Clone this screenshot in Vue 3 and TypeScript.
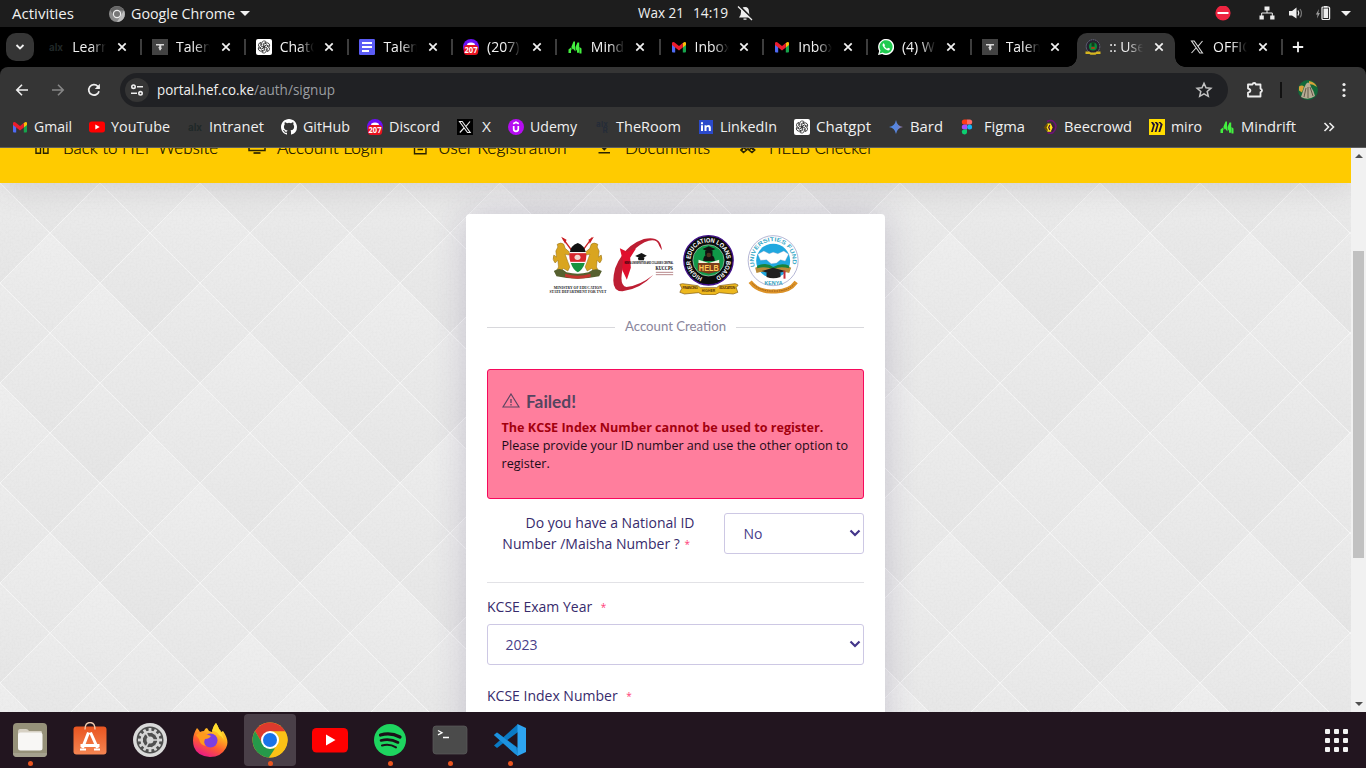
<script setup lang="ts">
import { h } from 'vue'

interface FitProps { t: string; w: number; s?: number; b?: number; hgt?: number; cls?: string }

// One line of text set to an exact advance width.
const FitText = (p: FitProps) =>
  h('svg', { class: ['fit', p.cls], width: p.w, height: p.hgt ?? 20 }, [
    h('text', { x: 0, y: p.b ?? 15, 'font-size': p.s ?? 14, textLength: p.w, lengthAdjust: 'spacingAndGlyphs' }, p.t),
  ])
FitText.props = ['t', 'w', 's', 'b', 'hgt', 'cls']

const tabs = [
  { icon: 'alx', title: 'Learn', sep: true },
  { icon: 'tal', title: 'Talent', sep: true },
  { icon: 'gpt', title: 'ChatG', sep: true },
  { icon: 'docs', title: 'Talent', sep: true },
  { icon: 'disc', title: '(207) D', sep: true },
  { icon: 'mind', title: 'Mindr', sep: true },
  { icon: 'gmail', title: 'Inbox', sep: true },
  { icon: 'gmail', title: 'Inbox', sep: true },
  { icon: 'wa', title: '(4) Wh', sep: true },
  { icon: 'tal', title: 'Talent', sep: false },
  { icon: 'helbfav', title: ':: User', sep: false, active: true },
  { icon: 'xw', title: 'OFFIC', sep: true },
]

const bookmarks = [
  { icon: 'gmail', t: 'Gmail', w: 38 },
  { icon: 'yt', t: 'YouTube', w: 59 },
  { icon: 'alx', t: 'Intranet', w: 55 },
  { icon: 'gh', t: 'GitHub', w: 47 },
  { icon: 'disc', t: 'Discord', w: 51 },
  { icon: 'xb', t: 'X', w: 9, pad: 3 },
  { icon: 'udemy', t: 'Udemy', w: 47 },
  { icon: 'room', t: 'TheRoom', w: 65 },
  { icon: 'li', t: 'LinkedIn', w: 57 },
  { icon: 'gpt', t: 'Chatgpt', w: 55 },
  { icon: 'bard', t: 'Bard', w: 33 },
  { icon: 'figma', t: 'Figma', w: 41, pad: 2 },
  { icon: 'bee', t: 'Beecrowd', w: 68 },
  { icon: 'miro', t: 'miro', w: 31 },
  { icon: 'mind', t: 'Mindrift', w: 55 },
]

const nav = [
  { icon: 'n-build', t: 'Back to HEF Website', w: 155, slot: 29 },
  { icon: 'n-desk', t: 'Account Login', w: 106, slot: 29 },
  { icon: 'n-doc', t: 'User Registration', w: 128.5, slot: 25 },
  { icon: 'n-down', t: 'Documents', w: 85, slot: 28.5 },
  { icon: 'n-bino', t: 'HELB Checker', w: 104, slot: 29 },
]

const dock = [
  { icon: 'd-files', run: true },
  { icon: 'd-soft', run: false },
  { icon: 'd-set', run: false },
  { icon: 'd-fox', run: false },
  { icon: 'd-chrome', run: true, focus: true },
  { icon: 'd-yt', run: false },
  { icon: 'd-spot', run: true },
  { icon: 'd-term', run: true },
  { icon: 'd-code', run: true },
]

// Shade offsets for the 3x3 repeat of the diamond pattern.
const shades = [0.0, 0.035, 0.015, 0.03, 0.0, 0.025, 0.02, 0.03, 0.0]
const diamonds: { cx: number; cy: number; o: number }[] = []
for (let r = 0; r <= 6; r++)
  for (let c = 0; c <= 3; c++) {
    const cx = c * 100 + (r % 2) * 50
    diamonds.push({ cx, cy: r * 50, o: shades[(r % 6 % 3) * 3 + (c % 3)] })
  }
const teeth = Array.from({ length: 12 }, (_, i) => i * 30)
</script>

<template>
  <div class="screen">
    <svg class="defs" width="0" height="0">
      <symbol id="alx" viewBox="0 0 16 16"><text x="1" y="11.5" font-size="10" font-weight="700" textLength="14" lengthAdjust="spacingAndGlyphs" fill="#202828" font-family="Inter">alx</text></symbol>
      <symbol id="room" viewBox="0 0 16 16"><g fill="#252c38" font-family="Inter" font-weight="700"><text x="2" y="7.5" font-size="8" textLength="12">alx</text><text x="8.5" y="14" font-size="8">R</text></g></symbol>
      <symbol id="tal" viewBox="0 0 16 16"><path fill="#434343" d="M0 0h16v16H0z" /><path fill="#d8d8d8" d="M4 5h8v1.500H9.300v2l.7.8-1 1v1H7.200v-1.500l-1-1 1-1V6.500H4z" /></symbol>
      <symbol id="gpt" viewBox="0 0 16 16"><rect width="16" height="16" rx="2" fill="#fff" /><g fill="none" stroke="#222" stroke-width=".8"><g v-for="a in [0, 60, 120, 180, 240, 300]" :key="a" :transform="`rotate(${a} 8 8)`"><path d="M5.700 6.200V4.300a2.500 2.500 0 0 1 4.600-1.200L7.400 4.700v3.600" /></g></g></symbol>
      <symbol id="docs" viewBox="0 0 16 16"><rect width="16" height="16" rx="1.200" fill="#5b5cf6" /><path stroke="#fff" stroke-width="2" d="M3 4h10M3 8h10M3 12h7" /></symbol>
      <symbol id="disc" viewBox="0 0 16 16"><circle cx="8" cy="8" r="8" fill="#6a11f5" /><path d="M4.500 4.500Q8 2.500 11.500 4.500L12 6H4z" fill="#fff" /><rect x=".8" y="6" width="14.400" height="10" rx="3.500" fill="#e8121f" /><text x="8" y="14" font-size="8" font-weight="700" fill="#fff" text-anchor="middle" font-family="Open Sans" textLength="13" lengthAdjust="spacingAndGlyphs">207</text></symbol>
      <symbol id="mind" viewBox="0 0 16 16"><path fill="#43f03f" d="M1.500 10.500l2.500-2v5.500H1.500zM4.500 7.500L6.500 2.500h1.500v9.500L5.800 9.500 4.500 11.500zM8.500 8L10.500 3.500h1.700v10.300h-2.200V10.500L8.500 12.500zM12.500 8l2 1.500v5h-2z" /></symbol>
      <symbol id="gmail" viewBox="0 0 16 16"><path fill="#4f6bf5" d="M1 5h3.200v8.500H2A1 1 0 0 1 1 12.500z" /><path fill="#16a54c" d="M11.800 5H15v7.500a1 1 0 0 1-1 1h-2.200z" /><path fill="#fcbd09" d="M11.800 4.200Q13.500 2 15 3.500V6l-3.200 2.600z" /><path fill="#ec1c2d" d="M1 3.800Q2.300 2 4.200 4L8 7l3.800-3v4.500L8 11.400 4.200 8.500 1 6z" /></symbol>
      <symbol id="wa" viewBox="0 0 16 16"><path fill="#fff" d="M0 16l1.200-4A8 8 0 1 1 4.100 14.900z" /><path fill="#1fcb4f" d="M1.600 14.400l.9-3A6.600 6.600 0 1 1 4.700 13.500z" /><path fill="#fff" d="M5.800 4.200c-1 .2-1.600 1.500-1 2.900 1 2.300 3 4 5.300 4.400 1 .1 1.900-.7 1.800-1.900l-1.900-.9-.9 1C7.800 9.200 6.900 8.300 6.400 7.100l.7-.9z" /></symbol>
      <symbol id="xw" viewBox="0 0 16 16"><path fill="none" stroke="#d8d8d8" stroke-width="1.100" d="M2.500 2h2.700l8.300 12h-2.700zM13.500 2L9 7.300M7 9L2.500 14" /></symbol>
      <symbol id="xb" viewBox="0 0 16 16"><path d="M0 0h16v16H0z" /><path fill="none" stroke="#eee" stroke-width="1.100" d="M2.500 2.500h2.700l8 11h-2.700zM13 2.500L9 7.300M7 9L2.800 13.500" /></symbol>
      <symbol id="helbfav" viewBox="0 0 16 16"><circle cx="8" cy="7.500" r="6.800" fill="#25222e" stroke="#6a6a86" stroke-width="1" stroke-dasharray="1.500 .6" /><circle cx="8" cy="7.500" r="4" fill="#098a39" /><path d="M6.500 3.500h3v4h-3z" fill="#153a1c" /><path d="M6.200 8h3.600v2H6.200z" fill="#a2401d" /><path fill="#d6b51f" d="M.5 12.500h4l1 1h5l1-1h4v2.500h-4l-1 .8h-5l-1-.8h-4z" /></symbol>
      <symbol id="yt" viewBox="0 0 16 16"><rect y="2.500" width="16" height="11" rx="2.700" fill="#f00" /><path fill="#fff" d="M6.300 5.500L10.700 8l-4.400 2.500z" /></symbol>
      <symbol id="gh" viewBox="0 0 16 16"><path fill="#fff" d="M8 0C3.580 0 0 3.580 0 8c0 3.540 2.290 6.530 5.470 7.590.4.070.55-.17.55-.38 0-.19-.01-.82-.01-1.490-2.010.37-2.530-.49-2.690-.94-.09-.23-.48-.94-.82-1.130-.28-.15-.68-.52-.01-.53.63-.01 1.080.58 1.230.82.72 1.210 1.870.87 2.330.66.07-.52.28-.87.51-1.070-1.780-.2-3.640-.89-3.640-3.950 0-.87.31-1.590.82-2.150-.08-.2-.36-1.020.08-2.120 0 0 .67-.21 2.200.82a7.600 7.600 0 0 1 4 0c1.530-1.040 2.200-.82 2.200-.82.44 1.100.16 1.920.08 2.120.51.56.82 1.270.82 2.150 0 3.070-1.870 3.750-3.650 3.950.29.25.54.73.54 1.480 0 1.070-.01 1.930-.01 2.200 0 .21.15.46.55.38A8.010 8.010 0 0 0 16 8c0-4.420-3.580-8-8-8z" /></symbol>
      <symbol id="udemy" viewBox="0 0 16 16"><circle cx="8" cy="8" r="8" fill="#b60cf2" /><path fill="none" stroke="#fff" stroke-width="1.700" d="M5.200 4.800L8 3.200l2.800 1.600M5.700 7v3a2.300 2.300 0 0 0 4.600 0V7" /></symbol>
      <symbol id="li" viewBox="0 0 16 16"><path fill="#2b4acb" d="M1 1h14v14H1z" /><path fill="#fff" d="M3 6.200h2V12H3zM3 3.300h2v2H3zM6.500 6.200h2v.9c1-1.600 4.300-1.400 4.300 1.500V12h-2V9c0-1.500-2.300-1.500-2.300 0v3h-2z" /></symbol>
      <linearGradient id="bardg" x1="0" x2="1"><stop offset="0" stop-color="#4a8bf0" /><stop offset=".6" stop-color="#5c84d8" /><stop offset="1" stop-color="#a57aa5" /></linearGradient>
      <symbol id="bard" viewBox="0 0 16 16"><path fill="url(#bardg)" d="M8 1Q9 7 15 8 9 9 8 15 7 9 1 8 7 7 8 1z" /></symbol>
      <symbol id="figma" viewBox="0 0 16 16"><path fill="#ff3b15" d="M7 .5v5H4.300a2.500 2.500 0 0 1 0-5z" /><path fill="#ff6a66" d="M7 .5h2.700a2.500 2.500 0 0 1 0 5H7z" /><path fill="#a64dff" d="M7 5.500v5H4.300a2.500 2.500 0 0 1 0-5z" /><circle cx="9.600" cy="8" r="2.500" fill="#13b5fb" /><path fill="#0ccf70" d="M7 10.500v2.500a2.600 2.500 0 1 1-2.700-2.500z" /></symbol>
      <symbol id="bee" viewBox="0 0 16 16"><path fill="none" stroke="#6e1276" stroke-width="1.600" d="M5 2.500q4-2 6.500 0c3.500 3 3 8-.5 11Q8.500 15 5.500 13.500" /><path fill="#ffe019" d="M5.500 4.500h3.500l2.300 4-2.300 4.300H5.500L2.500 8.500z" /><path fill="#6b4d00" d="M5 4.700L1.700 8.500 5 12.300l1-1L4.600 8.500 6 5.700z" /><path fill="#43103f" d="M7.500 5.500L6 8.500l1.500 3 .8-1-.9-2 .9-2zM10 4l2.500 4.500L10 13l-.8-1.300 1.500-3.200L9.200 5.300z" /></symbol>
      <symbol id="miro" viewBox="0 0 16 16"><path fill="#fd0" d="M0 0h16v16H0z" /><path fill="#1c1033" d="M2 3h2l2 2.500L3.800 13H2L4 6.500zM5.700 3h2l2 2L7.500 13H5.700L7.800 6zM9.400 3h2l2.300 2.200L11.200 13H9.400l2.200-7.500z" /></symbol>
      <symbol id="n-build" viewBox="0 0 18 18"><path d="M2 5h4.500v9.300H2zM9.500 2H14v12.300H9.500z" fill="none" stroke="#2b2300" stroke-width="1.400" /></symbol>
      <symbol id="n-desk" viewBox="0 0 18 18"><path d="M1 2h16v9.500H1z" fill="none" stroke="#2b2300" stroke-width="1.500" /><path d="M5.500 14h7" stroke="#2b2300" stroke-width="1.700" /></symbol>
      <symbol id="n-doc" viewBox="0 0 18 18"><path d="M1.500 2H13v12.700H1.500zM4.500 10.500H10" fill="none" stroke="#2b2300" stroke-width="1.400" /></symbol>
      <symbol id="n-down" viewBox="0 0 18 18"><path d="M1.500 13.700H13M7.300 2v8M4.300 7.500l3 3 3-3" fill="none" stroke="#2b2300" stroke-width="1.600" /></symbol>
      <symbol id="n-bino" viewBox="0 0 18 18"><path d="M5 4h6M2 11l3-7M13 11l-3-7M3.500 8.500l3 2.500-3 2.500L1 11zM12 8.500l2.700 2.500-2.700 2.500L9 11zM6.500 10h2.500" fill="none" stroke="#2b2300" stroke-width="1.600" /></symbol>

      <symbol id="d-files" viewBox="0 0 36 36"><rect x="1" y="1" width="34" height="34" rx="4" fill="#969179" /><path d="M1 31h34a4 4 0 0 1-4 4H5a4 4 0 0 1-4-4z" fill="#a5a18e" /><path fill="#d7d1c4" d="M6 10q0-3 2-3h6q2 0 3 2h12q1 0 1 2v6H6z" /><rect x="6" y="10.500" width="24.500" height="18" rx="2.500" fill="#f8f7f5" /></symbol>
      <linearGradient id="softg" x2="0" y2="1"><stop offset="0" stop-color="#e95420" /><stop offset="1" stop-color="#f58552" /></linearGradient>
      <symbol id="d-soft" viewBox="0 0 36 36"><rect x="1.500" y="4.500" width="33" height="28" rx="3" fill="url(#softg)" /><path fill="none" stroke="#f1cbaf" stroke-width="1.300" d="M13 7.500q0-7 5-7t5 7" /><path fill="none" stroke="#fff" stroke-width="3" d="M16.500 10.500L10.500 26M18.500 10.500L25.500 26M8.500 23.500h19" /><path stroke="#fff" stroke-width="2" d="M8 27.500h6M22 27.500h6" /></symbol>
      <symbol id="d-set" viewBox="0 0 36 36"><circle cx="18" cy="18" r="17" fill="#dadada" /><circle cx="18" cy="18" r="13.500" fill="#505050" /><g fill="#d5d5d5"><rect v-for="a in teeth" :key="a" x="16.600" y="6" width="2.800" height="5" :transform="`rotate(${a} 18 18)`" /></g><circle cx="18" cy="18" r="8.500" fill="none" stroke="#d5d5d5" stroke-width="2.200" /><path stroke="#d5d5d5" stroke-width="1.500" d="M18 18l-4.500-7.800M18 18l-4.500 7.800M18 18h9" /><circle cx="18" cy="18" r="3.500" fill="#d5d5d5" /></symbol>
      <linearGradient id="foxg" x1=".8" y1="0" x2=".3" y2="1"><stop offset="0" stop-color="#fff23d" /><stop offset=".35" stop-color="#ffb01f" /><stop offset=".65" stop-color="#ff5c30" /><stop offset="1" stop-color="#e8168b" /></linearGradient>
      <symbol id="d-fox" viewBox="0 0 36 36"><path fill="url(#foxg)" d="M5 6q2 2 3 4 2-1 4-1 1-3 3-3l2 3 3 1q1-6 4-9 2 3 3 6 2 1 2 3l2-1q7 10 3 17Q29 35 18 35 5 34 2 25-1 15 5 6z" /><circle cx="18.500" cy="18.500" r="7" fill="#7b3fe0" /><path fill="#ff9a1d" d="M4 13q5-4 10-1l5 2q-2 3-6 3-2 4 1 7Q8 23 7 17z" /><path fill="#ffdc2c" d="M20 9q2-6 4-8 2 3 3 6 3 4 5 11-2-4-5-5-2-4-7-4z" /></symbol>
      <symbol id="d-chrome" viewBox="0 0 36 36"><circle cx="18" cy="18" r="17.500" fill="#fbc116" /><path fill="#dd3a2d" d="M3 9A17.500 17.500 0 0 1 33.200 9.500H18L10.500 22z" /><path fill="#26994a" d="M3 9l7.600 13 7.400 4.500h7.300L17 35.500A17.500 17.500 0 0 1 3 9z" /><path fill="#fbc116" d="M18 9.500h15.300A17.500 17.500 0 0 1 17 35.500l8.500-13z" /><circle cx="18" cy="18" r="9" fill="#fff" /><circle cx="18" cy="18" r="7" fill="#1a73e8" /></symbol>
      <symbol id="d-yt" viewBox="0 0 36 36"><rect y="6" width="36" height="24.500" rx="4.500" fill="#f00" /><path fill="#fff" d="M14 12.500l9.500 5.500-9.500 5.500z" /></symbol>
      <symbol id="d-spot" viewBox="0 0 36 36"><circle cx="18" cy="18" r="16" fill="#1ed45f" /><g fill="none" stroke="#1b1118" stroke-linecap="round"><path stroke-width="3.200" d="M8.500 13q10-3 19.500 2" /><path stroke-width="2.600" d="M9 18.500q9-2.500 17 2" /><path stroke-width="2.100" d="M10 23.500q7.500-2 14 1.800" /></g></symbol>
      <symbol id="d-term" viewBox="0 0 36 36"><rect x="1" y="4" width="34" height="28" rx="3" fill="#4b4b4b" stroke="#5d5d5d" stroke-width=".7" /><path fill="none" stroke="#fff" stroke-width="1.300" d="M6 8.500l4 2.200-4 2.200M11 15.500h6" /></symbol>
      <symbol id="d-code" viewBox="0 0 36 36"><path fill="#0b6fb5" d="M2 13l3-2.500 21 15.500v8z" /><path fill="#0a7ac4" d="M26 2v8L5 26l-3-2.500z" /><path fill="#1d92de" d="M2 13l3-2.500L24 25l2 9-3-2z" /><path fill="#2ea4f0" d="M25.500 2L34 6v24l-8.500 4z" /></symbol>
    </svg>

    <header class="topbar">
      <FitText t="Activities" :w="62" cls="sys" />
      <svg class="gchrome" width="16" height="16" viewBox="0 0 16 16"><circle cx="8" cy="8" r="8" fill="#8b8b8b" /><path d="M1.200 4A8 8 0 0 1 15 4.500H8L5 10z" fill="#666" /><path d="M15 4.500A8 8 0 0 1 8 16l3.500-6z" fill="#bcbcbc" /><circle cx="8" cy="8" r="4.200" fill="#eee" /><circle cx="8" cy="8" r="3" fill="#777" /></svg>
      <FitText t="Google Chrome" :w="104" cls="sys" />
      <i class="caret"></i>
      <div class="clock">
        <FitText t="Wax 21" :w="46" :b="14" cls="sys" />
        <FitText t="14:19" :w="35" :b="14" cls="sys" />
        <svg width="16" height="16" viewBox="0 0 16 16"><path fill="#eee" d="M8 1q4 0 4 5 0 4 2 5.500H2Q4 10 4 6q0-5 4-5zM6.500 12.500h3v1.300h-3z" /><path stroke="#1d1d1d" stroke-width="2" d="M2.500 0l13 13" /><path stroke="#eee" stroke-width="1.300" d="M1 .5L15 14" /></svg>
      </div>
      <div class="status">
        <svg width="16" height="16" viewBox="0 0 16 16"><circle cx="8" cy="7" r="7.600" fill="#ee2440" /><path fill="#fff" d="M2.500 6h11v2h-11z" /></svg>
        <svg width="16" height="16" viewBox="0 0 16 16"><path fill="#eee" d="M5.500.5h5v4h-5zM.5 9.500h4.300v4H.5zM11.200 9.500h4.300v4h-4.300z" /><path fill="none" stroke="#eee" d="M8 4v3M2.700 10V7h10.600v3" /></svg>
        <svg width="16" height="16" viewBox="0 0 16 16"><path fill="#eee" d="M1 5h3l4.500-3.500v11L4 9.500H1z" /><path fill="none" stroke="#eee" stroke-width="1.200" d="M10 4.500q1.600 2.500 0 5" /><path fill="none" stroke="#777" stroke-width="1.200" d="M12 3q3 4 0 8.500" /></svg>
        <svg width="16" height="16" viewBox="0 0 16 16"><path fill="#999" d="M4 3L.8 8.500h1.700L2 12.500 5 7H3.300z" /><rect x="7" y="1" width="7.600" height="12.500" rx="1" fill="none" stroke="#eee" stroke-width="1.200" /><path fill="#eee" d="M8.500 2.500h4.600V12H8.500zM9 0h3.500v1.500H9z" /></svg>
        <i class="caret"></i>
      </div>
    </header>

    <div class="tabstrip">
      <div class="chev"><svg width="10" height="8" viewBox="0 0 10 8"><path d="M1.500 2L5 5.500 8.500 2" fill="none" stroke="#f0f0f0" stroke-width="1.800" /></svg></div>
      <div class="tabs">
        <div v-for="(tab, i) in tabs" :key="i" class="tab" :class="{ active: tab.active, sep: tab.sep }">
          <svg class="ti" width="16" height="16"><use :href="'#' + tab.icon" /></svg>
          <span class="tt">{{ tab.title }}</span>
          <svg class="tx" width="10" height="10" viewBox="0 0 10 10"><path d="M1.300 1.300l7.400 7.400M8.700 1.300L1.300 8.700" stroke="#f2f2f2" stroke-width="1.700" /></svg>
        </div>
      </div>
      <svg class="plus" width="12" height="12" viewBox="0 0 12 12"><path d="M6 .8v10.400M.8 6h10.400" stroke="#f2f2f2" stroke-width="1.800" /></svg>
    </div>

    <div class="toolbar">
      <div class="row">
        <svg class="tb" width="16" height="16" viewBox="0 0 16 16"><path d="M14 8H3M8 2.800L2.800 8 8 13.200" fill="none" stroke="#eee" stroke-width="1.600" /></svg>
        <svg class="tb" width="16" height="16" viewBox="0 0 16 16"><path d="M2 8h11M8 2.800L13.200 8 8 13.200" fill="none" stroke="#868686" stroke-width="1.600" /></svg>
        <svg class="tb" width="16" height="16" viewBox="0 0 16 16"><path d="M13 9.200A5.200 5.200 0 1 1 11.800 4.400L13.300 6" fill="none" stroke="#eee" stroke-width="1.700" /><path d="M13.900 1.800v5.100H8.800z" fill="#eee" /></svg>
        <div class="omni">
          <div class="tune"><svg width="14" height="14" viewBox="0 0 14 14"><g fill="none" stroke="#eee" stroke-width="1.600"><circle cx="3.500" cy="3.700" r="1.700" /><path d="M7 3.700h6M1 10.300h6" /><circle cx="10.500" cy="10.300" r="1.700" /></g></svg></div>
          <FitText t="portal.hef.co.ke" :w="97" cls="url" />
          <FitText t="/auth/signup" :w="81" cls="path" />
          <svg class="star" width="18" height="18" viewBox="0 0 18 18"><path d="M9 2.300l2 4.500 4.900.5-3.700 3.200 1.100 4.800L9 12.800l-4.300 2.500 1.100-4.800L2.100 7.300 7 6.800z" fill="none" stroke="#c4c4c4" stroke-width="1.500" /></svg>
        </div>
        <svg class="ext" width="18" height="18" viewBox="0 0 18 18"><path d="M2 3.500h4.500q.2-1.500 1.700-1.500t1.600 1.500h4.700v4.300q1.500.2 1.500 1.700t-1.500 1.700v4.300H2v-3.800q2.400-.4 2.400-2.100T2 7.600z" fill="none" stroke="#eee" stroke-width="1.800" stroke-linejoin="round" /></svg>
        <i class="vsep"></i>
        <svg class="ava" width="20" height="20" viewBox="0 0 20 20"><circle cx="10" cy="10" r="10" fill="#12693a" /><path fill="#d8a13a" d="M1 6.500q3-2 5 0l-2 6-3-2zM11 1q6 1 8 6-4-3-8-3z" /><path fill="#b6ab94" d="M8 4q2-3 4 0l1 3q3 4 4 9-7 5-14 1l3-9z" /><path stroke="#62584a" d="M8 8l-2 9M10 7v11M12 7l3 9" /></svg>
        <svg class="dots" width="4" height="16" viewBox="0 0 4 16"><g fill="#eee"><circle cx="2" cy="2.500" r="1.600" /><circle cx="2" cy="8" r="1.600" /><circle cx="2" cy="13.500" r="1.600" /></g></svg>
      </div>
      <div class="marks">
        <div v-for="b in bookmarks" :key="b.t" class="mark">
          <svg width="16" height="16"><use :href="'#' + b.icon" /></svg>
          <span v-if="b.pad" class="padx" :style="{ width: b.pad + 'px' }"></span>
          <FitText :t="b.t" :w="b.w" cls="bm" />
        </div>
        <svg class="more" width="12" height="10" viewBox="0 0 12 10"><path d="M1.500 1l4 4-4 4M6.500 1l4 4-4 4" fill="none" stroke="#eee" stroke-width="1.600" /></svg>
      </div>
    </div>

    <main class="page">
      <div class="view">
        <svg class="bg" width="1351" height="564">
          <defs>
            <linearGradient id="dg" x2="0" y2="1"><stop offset="0" stop-color="#efefef" /><stop offset="1" stop-color="#e8e8e8" /></linearGradient>
            <pattern id="dia" width="300" height="300" patternUnits="userSpaceOnUse" patternTransform="translate(0 -15)">
              <rect width="300" height="300" fill="#ededed" />
              <g v-for="(d, i) in diamonds" :key="i">
                <path :d="`M${d.cx} ${d.cy - 50}l50 50-50 50-50-50z`" fill="url(#dg)" stroke="#f6f6f6" stroke-width=".9" />
                <path :d="`M${d.cx} ${d.cy - 49}l49 49-49 49-49-49z`" fill="#000" :fill-opacity="d.o * 0.3" />
              </g>
            </pattern>
            <filter id="grain" x="0" y="0" width="100%" height="100%"><feTurbulence type="fractalNoise" baseFrequency=".5" numOctaves="2" /><feColorMatrix values="0 0 0 0 0  0 0 0 0 0  0 0 0 0 0  .12 0 0 0 -.035" /></filter>
          </defs>
          <rect width="1351" height="564" fill="url(#dia)" />
          <rect width="1351" height="564" filter="url(#grain)" opacity=".3" />
        </svg>
        <nav class="nav">
          <div v-for="n in nav" :key="n.t" class="ni">
            <span class="slot" :style="{ width: n.slot + 'px' }"><svg width="18" height="18"><use :href="'#' + n.icon" /></svg></span>
            <FitText :t="n.t" :w="n.w" :s="17" :b="18" :hgt="24" cls="nv" />
          </div>
        </nav>
        <section class="card">
          <div class="logos">
            <svg width="65" height="60" viewBox="16.500 30 195 180">
              <path stroke="#c22" stroke-width="4" d="M67 40l28 38M155 38l-28 38" /><path fill="#c91d22" d="M62 35l16 9-4 12zM160 35l-16 9 4 12z" />
              <g fill="#d9a520" stroke="#8f6a14" stroke-width="1.500"><path d="M50 58q12-8 20 0l4 12 14 12-2 8-12-2 8 22 6 16-6 12-14-8-8 14-14-2 8-16-2-20-8 8q-10-10-4-24l8 6-2-18 6-12z" /><path d="M172 58q-12-8-20 0l-4 12-14 12 2 8 12-2-8 22-6 16 6 12 14-8 8 14 14-2-8-16 2-20 8 8q10-10 4-24l-8 6 2-18-6-12z" /></g>
              <path fill="#111" d="M88 82q2-20 24-28 20 8 24 28z" /><path fill="#d6252c" d="M87 84h50q2 14-3 28H90q-5-14-3-28z" /><path stroke="#fff" stroke-width="3" d="M87 83h50M90 112h44" /><path fill="#17923f" d="M91 114h42q-6 20-21 28-15-8-21-28z" /><ellipse cx="111" cy="97" rx="9" ry="8" fill="#f1d6d0" />
              <path fill="#56602f" d="M40 138q20-14 38 4 34 8 66 0 20-16 40-4l-8 16q-66 14-128 0z" /><path fill="#c33630" d="M74 146q38 12 76 0v10q-38 10-76 0z" />
              <g fill="#222" font-family="Liberation Serif" font-weight="700"><text x="40" y="192" font-size="11" textLength="144">MINISTRY OF EDUCATION</text><text x="27" y="205" font-size="11" textLength="171">STATE DEPARTMENT FOR TVET</text></g>
            </svg>
            <svg width="65" height="60" viewBox="211.500 30 195 180">
              <path fill="#bd1e33" d="M364 76Q362 30 310 42 250 62 224 130 206 200 246 199 300 192 338 150 298 182 258 186 236 182 246 134 260 80 312 52 348 36 356 62z" /><path fill="#e00f2d" d="M238 70l22 10 27-10-18 28 2 30-12 36-14-30 2-26z" /><path fill="#151515" d="M284 93l19-9 16 8-16 9zM292 98h20l-2 8h-16z" />
              <text x="252" y="116" font-size="8" font-weight="700" textLength="146" lengthAdjust="spacingAndGlyphs" font-family="Liberation Sans">KENYA UNIVERSITIES AND COLLEGES CENTRAL</text><text x="345" y="136" font-size="17" textLength="52" lengthAdjust="spacingAndGlyphs" font-family="Liberation Serif" font-weight="700">KUCCPS</text><path stroke="#b98a8d" stroke-width="3" d="M346 142h52M346 149h52" />
            </svg>
            <svg width="65" height="60" viewBox="406.500 30 195 180">
              <circle cx="504" cy="106" r="74" fill="#0c0c0c" stroke="#42108c" stroke-width="4" /><circle cx="504" cy="106" r="47" fill="#109848" stroke="#e9e9e9" stroke-width="1.500" />
              <defs><path id="ring" d="M486 156.900A54 54 0 1 1 522 156.900" /></defs>
              <text font-family="Liberation Sans" font-size="19" font-weight="700" fill="#fff"><textPath href="#ring" textLength="298" lengthAdjust="spacingAndGlyphs">HIGHER EDUCATION LOANS BOARD</textPath></text>
              <path fill="#111" d="M486 72l19-8 20 8-20 9zM494 78h22v12h-22zM488 108q0-20 17-20t18 20z" /><circle cx="505" cy="90" r="7" fill="#4b311e" /><path fill="#f5f2df" d="M474 104l31 10 31-10v12H474z" /><path fill="#7c3d1c" d="M472 114h66v24l-33 8-33-8z" /><text x="475" y="138" font-size="25" font-weight="700" fill="#ffc955" font-family="Liberation Sans" textLength="60" lengthAdjust="spacingAndGlyphs">HELB</text>
              <path fill="#edb81e" stroke="#7b5711" stroke-width="2" d="M418 178l8-2 46 6 8 6h48l8-6 48-6 9 4-6 8 5 14-14 5-42-4-12 6h-38l-12-6-42 4-14-5 6-12z" /><g font-size="10" font-weight="700" font-family="Liberation Sans" fill="#55330a"><text x="426" y="192" textLength="46">FINANCING</text><text x="484" y="202" textLength="40">HIGHER</text><text x="536" y="192" textLength="48">EDUCATION</text></g>
            </svg>
            <svg width="65" height="60" viewBox="601.500 30 195 180">
              <circle cx="698" cy="107" r="75" fill="#fff" stroke="#8f93bf" stroke-width="2" /><circle cx="698" cy="107" r="51" fill="#20a8df" />
              <defs><path id="ring2" d="M643 125A58 58 0 1 1 753 125" /></defs><text font-family="Liberation Sans" font-size="17" font-weight="700" fill="#3aa9c7"><textPath href="#ring2" textLength="212" lengthAdjust="spacingAndGlyphs">UNIVERSITIES FUND</textPath></text>
              <path fill="#fff" stroke="#aac" d="M652 88l18-10 16 8 12-4 14 4 18-8 14 10-10 20-14-4-12 10-16 2-14-12-18 2z" /><path fill="#b88a38" d="M644 128q30-16 54 0 28-16 54 0l-6 16q-28-8-48 2-24-10-50-2z" /><path fill="#17843c" d="M650 122q30-12 48 4 24-14 48-4v8q-28-8-48 3-24-10-48-3z" /><path fill="#202020" d="M664 138l34-10 36 10-36 12zM678 144h42v12q-22 8-42 0z" /><path stroke="#c32c39" stroke-width="6" d="M732 137v24" /><text x="672" y="179" font-size="17" font-weight="700" fill="#2e9dbb" font-family="Liberation Sans" textLength="54" lengthAdjust="spacingAndGlyphs">KENYA</text><path fill="none" stroke="#dc9227" stroke-width="12" d="M629 170q25 32 70 29 46 3 68-28" /><path fill="none" stroke="#975c1c" stroke-width="3" stroke-dasharray="4 3" d="M636 176q25 24 63 22 41 2 62-20" />
            </svg>
          </div>
          <div class="divider"><span></span><FitText t="Account Creation" :w="101" :s="13" :b="14" cls="acc" /><span></span></div>
          <div class="alert">
            <div class="ah"><svg width="18" height="16" viewBox="0 0 18 16"><path d="M9 1L17 14H1z" fill="none" stroke="#5d4561" stroke-width="1.200" /><path d="M9 6v4M9 11v1.500" stroke="#5d4561" stroke-width="1.300" /></svg><FitText t="Failed!" :w="50" :s="16.500" :b="16" cls="fail" /></div>
            <p><b>The KCSE Index Number cannot be used to register.</b><br />Please provide your ID number and use the other option to register.</p>
          </div>
          <div class="qrow">
            <label>Do you have a National ID<br />Number /Maisha Number ? <em>*</em></label>
            <div class="select small"><span>No</span><svg width="12" height="8" viewBox="0 0 12 8"><path d="M1.500 1.500L6 6l4.500-4.500" fill="none" stroke="#43358a" stroke-width="2.200" /></svg></div>
          </div>
          <hr />
          <label class="lab">KCSE Exam Year <em>*</em></label>
          <div class="select"><span>2023</span><svg width="12" height="8" viewBox="0 0 12 8"><path d="M1.500 1.500L6 6l4.500-4.500" fill="none" stroke="#43358a" stroke-width="2.200" /></svg></div>
          <label class="lab two">KCSE Index Number <em>*</em></label>
        </section>
      </div>
      <div class="scroll"><i class="up"></i><i class="thumb"></i><i class="down"></i></div>
    </main>

    <footer class="dock">
      <div v-for="d in dock" :key="d.icon" class="app" :class="{ focus: d.focus, run: d.run }"><svg width="36" height="36"><use :href="'#' + d.icon" /></svg></div>
      <div class="grid"><i v-for="n in 9" :key="n"></i></div>
    </footer>
  </div>
</template>

<style>
body { margin: 0; overflow: hidden; }
.fit { display: block; flex: none; overflow: visible; font-family: "Open Sans", "Noto Sans", sans-serif; fill: #f0f0f0; }
.fit.path { fill: #9a9da1; }
.fit.nv { font-family: Lato, sans-serif; font-weight: 300; fill: #0c0a00; stroke: #0c0a00; stroke-width: .2px; }
.fit.acc { font-family: Lato, sans-serif; fill: #8a869c; }
.fit.fail { font-family: Lato, sans-serif; font-weight: 700; fill: #54455f; }
</style>

<style scoped>
.screen { position: relative; width: 1366px; height: 768px; overflow: hidden; display: flex; flex-direction: column; font-family: "Open Sans", "Noto Sans", sans-serif; background: #000; }
.screen * { box-sizing: border-box; }
.defs { position: absolute; }
.topbar { height: 27px; flex: none; background: #1d1d1d; display: flex; align-items: center; padding-left: 12px; }
.gchrome { margin: 0 6px 0 35px; }
.caret { width: 0; height: 0; border: 5px solid transparent; border-top: 5px solid #f0f0f0; border-bottom: 0; margin-left: 5px; }
.clock { display: flex; align-items: center; gap: 9px; margin-left: 388px; }
.status { display: flex; align-items: center; margin-left: auto; padding-right: 15px; }
.status svg { margin-right: 13px; }
.status svg:first-child { margin-right: 28px; }
.status svg:nth-child(3) { margin-right: 11px; }
.status svg:nth-child(4) { margin-right: 5px; }
.tabstrip { height: 40px; flex: none; background: #000; display: flex; align-items: center; padding-left: 6px; }
.chev { width: 28px; height: 28px; border-radius: 10px; background: #353535; display: flex; align-items: center; justify-content: center; }
.tabs { display: flex; width: 1244.500px; margin-left: 4.300px; height: 40px; }
.tab { position: relative; flex: 1; display: flex; align-items: center; padding-left: 10px; }
.ti { flex: none; }
.tt { width: 34px; margin: -2px 0 0 8px; overflow: hidden; white-space: nowrap; font-size: 14px; color: #f2f2f2; -webkit-mask-image: linear-gradient(90deg, #000 55%, transparent); mask-image: linear-gradient(90deg, #000 55%, transparent); }
.tx { margin-left: 10.500px; }
.sep::after { content: ""; position: absolute; right: 0; top: 12px; width: 2px; height: 16px; background: #3d3d3d; }
.active::before { content: ""; position: absolute; z-index: 0; left: 2px; right: 4px; top: 6px; bottom: 0; background: #353535; border-radius: 10px 10px 0 0; }
.active::after { content: ""; position: absolute; left: -8px; right: -6px; bottom: 0; height: 10px; background: radial-gradient(circle at 0 0, transparent 9.500px, #353535 10px) left / 10px 10px no-repeat, radial-gradient(circle at 100% 0, transparent 9.500px, #353535 10px) right / 10px 10px no-repeat; }
.active > * { position: relative; z-index: 1; }
.plus { margin-left: 9px; }
.toolbar { height: 81px; flex: none; background: #353535; border-bottom: 1px solid #5e5e5e; border-radius: 8px 8px 0 0; }
.row { height: 46px; display: flex; align-items: center; padding-left: 14px; }
.tb { margin-right: 20px; }
.tb:nth-child(3) { margin-right: 18px; }
.omni { width: 1108px; height: 34px; border-radius: 17px; background: #202124; display: flex; align-items: center; padding-left: 5px; }
.tune { width: 24px; height: 24px; border-radius: 50%; background: #353535; display: flex; align-items: center; justify-content: center; margin-right: 8px; }
.star { margin-left: auto; margin-right: 15px; }
.ext { margin-left: 18px; }
.vsep { width: 2px; height: 16px; background: #111; margin: 0 17px 0 16px; }
.ava { margin-left: -1px; }
.dots { margin-left: 24px; }
.marks { height: 28px; display: flex; align-items: center; padding-left: 12px; }
.mark { display: flex; align-items: center; margin-right: 17px; }
.mark > .fit { margin-left: 6px; }
.more { margin-left: 10px; }
.page { flex: 1; display: flex; min-height: 0; }
.view { position: relative; width: 1351px; height: 564px; overflow: hidden; }
.bg { position: absolute; left: 0; top: 0; }
.nav { position: relative; height: 35px; background: #ffcb00; display: flex; gap: 30px; padding-left: 34px; box-shadow: 0 0 35px rgba(70, 60, 70, .2); }
.ni { display: flex; height: 24px; margin-top: -12px; }
.slot { flex: none; height: 24px; }
.slot svg { display: block; margin-top: 3px; }
.card { position: relative; width: 419px; height: 600px; margin: 31px 0 0 466px; padding: 21px 21px 0; background: #fff; border-radius: 4px; box-shadow: 0 0 34px rgba(69, 55, 110, .2); }
.logos { display: flex; justify-content: center; height: 60px; }
.divider { display: flex; align-items: center; gap: 10px; height: 20px; margin-top: 22px; }
.divider span { flex: 1; height: 1px; background: #d8d8dc; }
.alert { margin-top: 32px; height: 130px; border: 1px solid #f6095c; border-radius: 3px; background: #ff7e9d; padding: 22px 14px 0; }
.ah { display: flex; gap: 6px; height: 27px; }
.ah svg:first-child { margin: 1px 0 0; }
.alert p { margin: 0 -5px 0 -.5px; font-size: 12.600px; line-height: 18px; color: #1c0b18; }
.alert b { color: #a3000e; }
.qrow { display: flex; justify-content: space-between; margin-top: 14px; }
label { font-size: 14px; line-height: 21px; color: #372b6c; }
.qrow label { width: 207.500px; text-align: right; margin-top: -1px; }
em { font-style: normal; color: #ff3b77; font-size: 10px; margin-left: 1px; margin-right: 4.500px; vertical-align: 1px; line-height: 1; }
.lab em { margin-left: 5px; }
.select { height: 41px; border: 1px solid #cdc8e4; border-radius: 3px; display: flex; align-items: center; justify-content: space-between; padding: 0 2.500px 0 17.500px; font-size: 14px; color: #48408a; background: #fff; }
.select.small { width: 140px; padding-left: 18.500px; }
.select svg { margin-top: -1px; }
hr { border: 0; height: 1px; background: #e2e2e6; margin: 28px 0 13px; }
.lab { display: block; height: 28px; }
.lab.two { margin-top: 20px; }
.scroll { width: 15px; background: #f1f1f1; display: flex; flex-direction: column; align-items: center; }
.up { border: 4px solid transparent; border-top: 0; border-bottom: 4px solid #505050; margin-top: 6px; }
.thumb { width: 11px; height: 307px; background: #c1c1c1; margin-top: 93px; }
.down { border: 4px solid transparent; border-bottom: 0; border-top: 4px solid #505050; margin-top: auto; margin-bottom: 6px; }
.dock { height: 56px; flex: none; background: #22151f; display: flex; align-items: center; padding-left: 4px; gap: 8px; }
.app { position: relative; width: 52px; height: 52px; border-radius: 4px; display: flex; align-items: center; justify-content: center; }
.app.focus { background: #4a3f48; }
.app.run::after { content: ""; position: absolute; bottom: 0; left: 23.500px; width: 5px; height: 5px; border-radius: 50%; background: #e95420; }
.grid { margin-left: auto; margin-right: 18px; display: grid; grid-template-columns: repeat(3, 5px); gap: 4px; }
.grid i { width: 5px; height: 5px; border-radius: 1px; background: #f4f4f4; }
</style>
